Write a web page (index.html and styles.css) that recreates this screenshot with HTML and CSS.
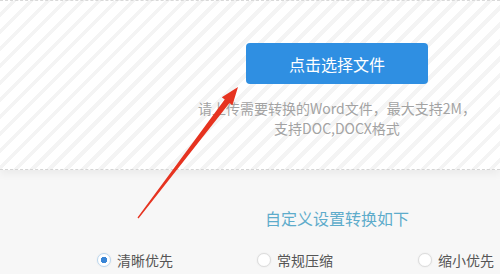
FILE: index.html
```html
<!DOCTYPE html>
<html lang="zh-CN">
<head>
<meta charset="UTF-8">
<meta name="viewport" content="width=device-width, initial-scale=1.0">
<title>Word转换</title>
<link rel="stylesheet" href="styles.css">
</head>
<body>
<div class="upload-box">
<div class="upload-inner">
<button type="button" class="pick-btn">点击选择文件</button>
<p class="hint">请上传需要转换的Word文件，最大支持2M，<br>支持DOC,DOCX格式</p>
</div>
</div>

<div class="settings">
<div class="settings-title">自定义设置转换如下</div>
<div class="options">
<label class="option"><span class="radio checked"></span>清晰优先</label>
<label class="option"><span class="radio"></span>常规压缩</label>
<label class="option"><span class="radio"></span>缩小优先</label>
</div>
</div>

<!-- red annotation arrow drawn over the page -->
<svg class="arrow" width="500" height="274" viewBox="0 0 500 274">
<polygon points="137.5,217.6 138.5,218.4 229.5,103.1 232.4,105.3 238,87 221.8,97.3 224.7,99.5" fill="#e63320"/>
</svg>
</body>
</html>
```

FILE: styles.css
```css
body {
margin: 0;
background-color: #f7f7f7;
font-family: "Noto Sans CJK SC", "Noto Sans", sans-serif;
overflow: hidden;
}
.upload-box {
height: 168px;
border-top: 1px dashed #d9d9d9;
border-bottom: 1px dashed #d4d4d4;
background-color: #fff;
background-image: repeating-linear-gradient(135deg, #fff 0, #fff 8px, #f4f4f4 8px, #f4f4f4 12px);
box-shadow: 0 4px 8px rgba(0, 0, 0, 0.05);
}
.upload-inner {
padding: 42px 0 0 174px;
display: flex;
flex-direction: column;
align-items: center;
}
.pick-btn {
width: 182px;
height: 41px;
border: none;
border-radius: 4px;
background-color: #2f8fe2;
color: #fff;
font-family: inherit;
font-size: 16px;
cursor: pointer;
}
.hint {
margin: 14px 0 0;
font-size: 14px;
line-height: 20px;
color: #a3a3a3;
text-align: center;
white-space: nowrap;
}
.settings {
padding: 36px 0 0;
}
.settings-title {
padding-left: 174px;
text-align: center;
font-size: 16px;
line-height: 24px;
color: #5eaccb;
}
.options {
margin-top: 20px;
padding-left: 97px;
display: grid;
grid-template-columns: 160px 161px 1fr;
}
.option {
display: flex;
align-items: center;
gap: 6px;
min-width: 0;
font-size: 14px;
line-height: 20px;
color: #555;
white-space: nowrap;
}
.radio {
width: 12px;
height: 12px;
border-radius: 50%;
border: 1px solid #dcdcdc;
background-color: #fff;
box-shadow: 0 0 2px rgba(0, 0, 0, 0.08);
flex: none;
}
.radio.checked {
border-color: #b9d6ef;
background: radial-gradient(circle, #3a86d6 0, #3a86d6 3px, #fff 3.5px);
}
.arrow {
position: absolute;
left: 0;
top: 0;
pointer-events: none;
}
```
